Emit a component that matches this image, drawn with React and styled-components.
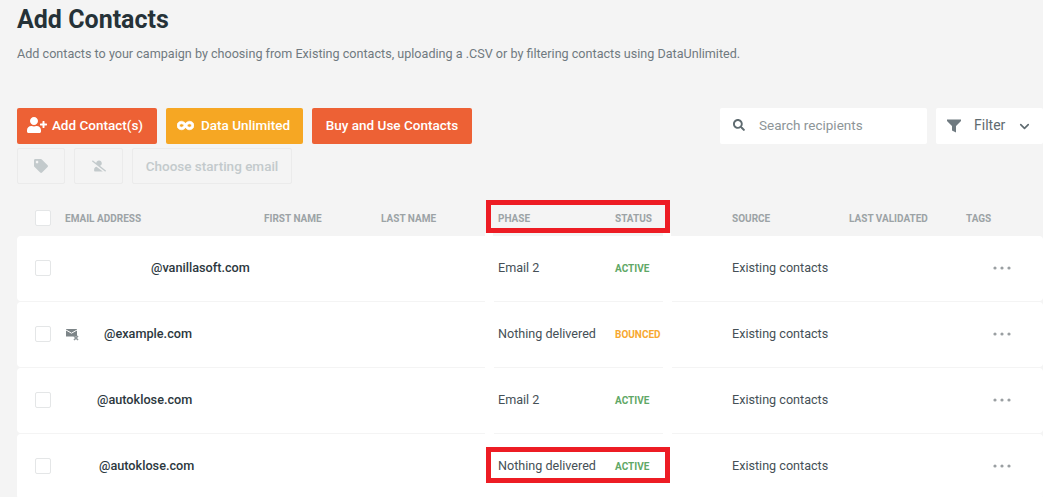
import styled, { createGlobalStyle } from "styled-components";
import { FaUserPlus, FaInfinity, FaTag, FaUserSlash, FaSearch } from "react-icons/fa";
import { FiChevronDown } from "react-icons/fi";

const GlobalStyle = createGlobalStyle`
    html, body {
        margin: 0;
        background: #f4f4f4;
        font-family: Roboto, "Liberation Sans", sans-serif;
        overflow: hidden;
    }
    * {
        box-sizing: border-box;
    }
`;

const Page = styled.div`
    position: relative;
    width: 1043px;
    height: 497px;
    overflow: hidden;
    padding-left: 17px;
`;

const Title = styled.h1`
    margin: 0;
    padding-top: 5px;
    font-size: 25px;
    line-height: 30px;
    font-weight: 700;
    color: #263238;
`;

const Intro = styled.p`
    margin: 10px 0 0;
    font-size: 12.6px;
    line-height: 18px;
    color: #707a80;
`;

const Toolbar = styled.div`
    display: flex;
    justify-content: space-between;
    margin-top: 45px;
`;

const ButtonRow = styled.div`
    display: flex;
    gap: 9px;
`;

const Button = styled.button`
    display: flex;
    align-items: center;
    justify-content: center;
    gap: ${props => props.gap || 0}px;
    width: ${props => props.width}px;
    height: 36px;
    padding: 0 ${props => props.shift || 0}px 2px 0;
    border: 0;
    border-radius: 2px;
    background: ${props => props.color};
    color: #fff;
    font: 500 13.5px Roboto, sans-serif;
`;

const GhostRow = styled(ButtonRow)`
    margin-top: 4px;
`;

const GhostButton = styled.button`
    display: flex;
    align-items: center;
    justify-content: center;
    width: ${props => props.width}px;
    height: 36px;
    padding: 0 0 1px;
    border: 1px solid #ebebeb;
    border-radius: 2px;
    background: transparent;
    color: #c3cacc;
    font: 500 13.5px Roboto, sans-serif;

    & > svg {
        font-size: 14px;
    }
`;

const SearchGroup = styled.div`
    display: flex;
    gap: 9px;
`;

const SearchBox = styled.div`
    display: flex;
    align-items: center;
    gap: 14px;
    width: 207px;
    height: 36px;
    padding: 0 0 2px 13px;
    border-radius: 2px;
    background: #fff;
    color: #8d9598;
    font-size: 13.5px;

    & > svg {
        font-size: 12px;
        color: #5f6b70;
    }
`;

const FilterBox = styled.div`
    display: flex;
    align-items: center;
    width: 107px;
    height: 36px;
    padding-left: 11px;
    border-radius: 2px;
    background: #fff;
    color: #5f6b70;
    font-size: 14px;

    & > span {
        margin: 0 12px 2px 13px;
    }
`;

const FunnelIcon = styled.svg`
    width: 14px;
    height: 14px;
    color: #6f7a80;
`;

const TableHead = styled.div`
    display: grid;
    grid-template-columns: 30px 199px repeat(7, 117px);
    align-items: center;
    height: 36px;
    margin-top: 16px;
    padding-left: 18px;
    color: #9ca3a6;
    font-size: 10px;
    font-weight: 700;
`;

const Rows = styled.div`
    display: flex;
    flex-direction: column;
    gap: 1px;
`;

const Row = styled.div`
    position: relative;
    display: grid;
    grid-template-columns: 30px 199px repeat(7, 117px);
    align-items: center;
    height: 65px;
    padding: 0 0 1px 18px;
    border-radius: 4px;
    background: #fff;
    color: #455056;
    font-size: 12.6px;

    &::before,
    &::after {
        content: "";
        position: absolute;
        bottom: -1px;
        width: 9px;
        height: 1px;
        background: #fff;
    }

    &::before {
        left: 468px;
    }

    &::after {
        left: 646px;
    }
`;

const Checkbox = styled.span`
    display: block;
    width: 16px;
    height: 16px;
    border: 1px solid #e4e6e7;
    border-radius: 2px;
    background: #fff;
`;

const EmailCell = styled.div`
    display: flex;
    align-items: center;
    grid-column: span 3;
    padding-left: ${props => props.indent}px;
    color: #2c383e;
    font-size: 12.7px;
    font-weight: 500;
    margin-top: -2px;
`;

const TextCell = styled.div`
    margin-top: -2px;
`;

const BouncedIcon = styled.svg`
    width: 13px;
    height: 13px;
    margin: 2px 25px 0 -38px;
`;

const Status = styled.div`
    color: ${props => props.color};
    font-size: 10px;
    font-weight: 700;
    margin-top: 1px;
`;

const Dots = styled.svg`
    width: 18px;
    height: 4px;
    margin-left: 27px;
    color: #9a9fa2;
`;

const Highlight = styled.div`
    position: absolute;
    left: 486px;
    top: ${props => props.top}px;
    width: 184px;
    height: ${props => props.height}px;
    border: 5px solid #ed1c24;
`;

// the white slivers left under the annotation box, where it meets the first row
const HeadHighlight = styled(Highlight)`
    &::before,
    &::after {
        content: "";
        position: absolute;
        top: 28px;
        width: 8px;
        height: 3px;
        background: #fff;
    }

    &::before {
        left: -6px;
    }

    &::after {
        right: -6px;
    }
`;

const contacts = [
    { email: "@vanillasoft.com", indent: 86, phase: "Email 2", status: "ACTIVE" },
    { email: "@example.com", indent: 39, phase: "Nothing delivered", status: "BOUNCED", bounced: true },
    { email: "@autoklose.com", indent: 32, phase: "Email 2", status: "ACTIVE" },
    { email: "@autoklose.com", indent: 34, phase: "Nothing delivered", status: "ACTIVE" },
];

const statusColors = { ACTIVE: "#5fa866", BOUNCED: "#f7a830" };

const App = () => {
    return (
        <Page>
            <GlobalStyle />
            <Title>Add Contacts</Title>
            <Intro>Add contacts to your campaign by choosing from Existing contacts, uploading a .CSV or by filtering contacts using DataUnlimited.</Intro>

            <Toolbar>
                <ButtonRow>
                    <Button width={140} color="#ed6135" gap={5} shift={4}><FaUserPlus size={20} />Add Contact(s)</Button>
                    <Button width={137} color="#f6a723" gap={7} shift={2}><FaInfinity size={17} stroke="currentColor" strokeWidth={24} />Data Unlimited</Button>
                    <Button width={160} color="#ed6135">Buy and Use Contacts</Button>
                </ButtonRow>
                <SearchGroup>
                    <SearchBox><FaSearch />Search recipients</SearchBox>
                    <FilterBox>
                        <FunnelIcon viewBox="0 0 14 14">
                            <path d="M0 .5h14v1.6L9 7v6.5L5 11.5V7L0 2.1z" fill="currentColor" />
                        </FunnelIcon>
                        <span>Filter</span>
                        <FiChevronDown size={15} strokeWidth={2.6} />
                    </FilterBox>
                </SearchGroup>
            </Toolbar>

            <GhostRow>
                <GhostButton width={48}><FaTag /></GhostButton>
                <GhostButton width={49}><FaUserSlash /></GhostButton>
                <GhostButton width={160}>Choose starting email</GhostButton>
            </GhostRow>

            <TableHead>
                <Checkbox />
                <div>EMAIL ADDRESS</div>
                <div>FIRST NAME</div>
                <div>LAST NAME</div>
                <div>PHASE</div>
                <div>STATUS</div>
                <div>SOURCE</div>
                <div>LAST VALIDATED</div>
                <div>TAGS</div>
            </TableHead>

            <Rows>
                {contacts.map((contact, i) =>
                    <Row key={i}>
                        <Checkbox />
                        <EmailCell indent={contact.indent}>
                            {contact.bounced &&
                                <BouncedIcon viewBox="0 0 13 13">
                                    <path d="M0 1h11v7.5H0z" fill="#7d8588" />
                                    <path d="M0 2l5.5 3.2L11 2" fill="none" stroke="#fff" strokeWidth="1" />
                                    <path d="M8 8l4 4M12 8l-4 4" stroke="#8d9598" strokeWidth="1.6" />
                                </BouncedIcon>
                            }
                            {contact.email}
                        </EmailCell>
                        <TextCell>{contact.phase}</TextCell>
                        <Status color={statusColors[contact.status]}>{contact.status}</Status>
                        <TextCell>Existing contacts</TextCell>
                        <div />
                        <Dots viewBox="0 0 18 4">
                            <circle cx="2" cy="2" r="1.6" fill="currentColor" />
                            <circle cx="9" cy="2" r="1.6" fill="currentColor" />
                            <circle cx="16" cy="2" r="1.6" fill="currentColor" />
                        </Dots>
                    </Row>
                )}
            </Rows>

            <HeadHighlight top={200} height={33} />
            <Highlight top={447} height={36} />
        </Page>
    );
}

export default App;
